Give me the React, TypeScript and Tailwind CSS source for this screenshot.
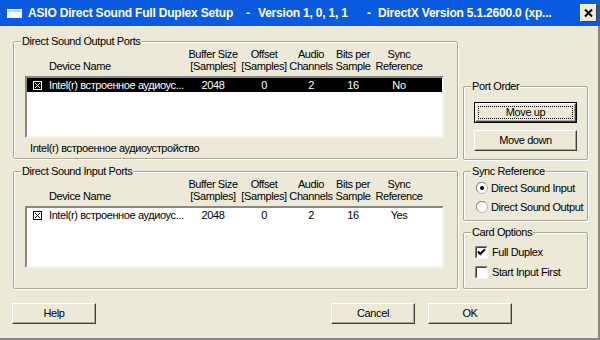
import React from 'react';

const cols = 'grid grid-cols-[20px_139px_54px_48px_46px_38px_54px]';

const Hdr = ({ a, b }: { a: string; b: string }) => (
    <div className="flex flex-col items-center whitespace-nowrap">
        <span>{a}</span>
        <span>{b}</span>
    </div>
);

const BoxX = ({ color }: { color: string }) => (
    <svg width="9" height="9" viewBox="0 0 9 9" className="block">
        <rect x="0.5" y="0.5" width="8" height="8" fill="none" stroke={color} />
        <path d="M2 2 L7 7 M7 2 L2 7" stroke={color} strokeWidth="1" />
    </svg>
);

const Cell = ({ children }: { children: React.ReactNode }) => (
    <div className="flex justify-center whitespace-nowrap">{children}</div>
);

const PortRow = ({ selected, sync }: { selected?: boolean; sync: string }) => (
    <div className={`${cols} h-[14px] items-center leading-[14px] ${selected ? 'bg-black text-white' : ''}`}>
        <div className="pl-[6px]">
            <BoxX color={selected ? '#fff' : '#000'} />
        </div>
        <div className="pl-[2px] whitespace-nowrap">Intel(r) встроенное аудиоус...</div>
        <Cell>2048</Cell>
        <Cell>0</Cell>
        <Cell>2</Cell>
        <Cell>16</Cell>
        <Cell>{sync}</Cell>
    </div>
);

const Group = ({ title, className, children }: { title: string; className: string; children: React.ReactNode }) => (
    <fieldset className={`m-0 p-0 min-w-0 border border-[#aca899] rounded-[2px] shadow-[inset_1px_1px_0_#fff,1px_1px_0_#fff] ${className}`}>
        <legend className="ml-[7px] px-[1px] leading-[13px] bg-[#ece9d8]">{title}</legend>
        {children}
    </fieldset>
);

const PortGroup = ({ title, selected, sync, footer }: { title: string; selected?: boolean; sync: string; footer?: string }) => (
    <Group title={title} className="h-[124px]">
        <div className="pl-[11px]">
            <div className={`${cols} pl-[2px] leading-[12px]`}>
                <div />
                <div className="self-end pl-[2px]">Device Name</div>
                <Hdr a="Buffer Size" b="[Samples]" />
                <Hdr a="Offset" b="[Samples]" />
                <Hdr a="Audio" b="Channels" />
                <Hdr a="Bits per" b="Sample" />
                <Hdr a="Sync" b="Reference" />
            </div>
            <div className="mt-[4px] w-[419px] h-[62px] bg-white border-2 border-t-[#8a887e] border-l-[#8a887e] border-r-[#f5f4ef] border-b-[#f5f4ef]">
                <PortRow selected={selected} sync={sync} />
            </div>
            {footer && <div className="mt-[4px] pl-[5px] leading-[12px]">{footer}</div>}
        </div>
    </Group>
);

const Button = ({ label, className = '' }: { label: string; className?: string }) => (
    <div className={`w-[84px] h-[21px] flex items-center justify-center border border-t-white border-l-white border-r-[#404040] border-b-[#404040] shadow-[inset_-1px_-1px_0_#aca899] ${className}`}>
        {label}
    </div>
);

const Radio = ({ on }: { on?: boolean }) => (
    <svg width="12" height="12" viewBox="0 0 12 12" className="block">
        <circle cx="6" cy="6" r="5.5" fill="#fff" stroke="#b8b5a6" />
        <path d="M1.8 9.5 A5 5 0 0 1 9.5 1.8" fill="none" stroke="#8a887e" />
        {on && <circle cx="6" cy="6" r="2" fill="#000" />}
    </svg>
);

const Check = ({ on }: { on?: boolean }) => (
    <svg width="13" height="13" viewBox="0 0 13 13" className="block">
        <rect x="0" y="0" width="13" height="13" fill="#fff" />
        <path d="M0.5 12.5 V0.5 H12.5" fill="none" stroke="#808080" />
        <path d="M1.5 11.5 V1.5 H11.5" fill="none" stroke="#404040" />
        <path d="M0.5 12.5 H12.5 V0.5" fill="none" stroke="#f4f3ee" />
        {on && <path d="M3 5.5 L5.3 8 L10 3.2" fill="none" stroke="#000" strokeWidth="2" />}
    </svg>
);

export default function App() {
    return (
        <div className="w-[600px] h-[340px] flex flex-col bg-[#ece9d8] text-black text-[11px] tracking-[-0.4px] font-['Liberation_Sans',Arial,sans-serif] overflow-hidden">
            {/* Title bar */}
            <div className="h-[26px] bg-[#0b5be1] flex items-center pl-[7px] pr-[3px] text-white font-bold text-[12px] tracking-[-0.2px] whitespace-nowrap">
                <svg width="15" height="9" viewBox="0 0 15 9" className="block shrink-0">
                    <rect x="0" y="0" width="15" height="9" fill="#fff" />
                    <rect x="1" y="1" width="13" height="2" fill="#c4d4f2" />
                </svg>
                <span className="ml-[6px] w-[210px]">ASIO Direct Sound Full Duplex Setup</span>
                <span className="w-[20px] text-center">-</span>
                <span className="w-[102px]">Version 1, 0, 1, 1</span>
                <span className="w-[18px] text-center">-</span>
                <span>DirectX Version 5.1.2600.0 (xp...</span>
                <div className="ml-auto w-[17px] h-[18px] bg-[#ece9d8] flex items-center justify-center border border-t-white border-l-white border-r-[#404040] border-b-[#404040]">
                    <svg width="9" height="8" viewBox="0 0 9 8">
                        <path d="M1 0.5 L8 7.5 M8 0.5 L1 7.5" stroke="#000" strokeWidth="2" />
                    </svg>
                </div>
            </div>

            {/* Body */}
            <div className="flex-1 flex flex-col pl-[13px] pt-[9px] border-r-2 border-b-2 border-[#8a887e]">
                <div className="flex gap-[5px]">
                    <div className="w-[445px] flex flex-col gap-[6px]">
                        <PortGroup
                            title="Direct Sound Output Ports"
                            selected
                            sync="No"
                            footer="Intel(r) встроенное аудиоустройство"
                        />
                        <PortGroup title="Direct Sound Input Ports" sync="Yes" />
                    </div>

                    <div className="w-[125px] mt-[45px] flex flex-col gap-[5px]">
                        <Group title="Port Order" className="h-[80px]">
                            <div className="pl-[10px] mt-[9px] flex flex-col gap-[7px]">
                                <div className="w-[103px] h-[21px] border border-black">
                                    <div className="w-full h-full p-[2px] border border-t-white border-l-white border-r-[#404040] border-b-[#404040] shadow-[inset_-1px_-1px_0_#aca899]">
                                        <div className="w-full h-full flex items-center justify-center border border-dotted border-black">Move up</div>
                                    </div>
                                </div>
                                <Button label="Move down" className="w-[103px]" />
                            </div>
                        </Group>
                        <Group title="Sync Reference" className="h-[56px]">
                            <div className="pl-[12px] mt-[2px] flex flex-col gap-[3px]">
                                <div className="h-[16px] flex items-center gap-[3px]">
                                    <Radio on />
                                    <span>Direct Sound Input</span>
                                </div>
                                <div className="h-[16px] flex items-center gap-[3px]">
                                    <Radio />
                                    <span>Direct Sound Output</span>
                                </div>
                            </div>
                        </Group>
                        <Group title="Card Options" className="h-[63px]">
                            <div className="pl-[11px] mt-[5px] flex flex-col gap-[4px]">
                                <div className="h-[16px] flex items-center gap-[4px]">
                                    <Check on />
                                    <span>Full Duplex</span>
                                </div>
                                <div className="h-[16px] flex items-center gap-[4px]">
                                    <Check />
                                    <span>Start Input First</span>
                                </div>
                            </div>
                        </Group>
                    </div>
                </div>

                {/* Buttons */}
                <div className="mt-[14px] -ml-[1px] w-[500px] flex justify-between">
                    <Button label="Help" />
                    <div className="flex gap-[13px]">
                        <Button label="Cancel" />
                        <Button label="OK" />
                    </div>
                </div>
            </div>
        </div>
    );
}
